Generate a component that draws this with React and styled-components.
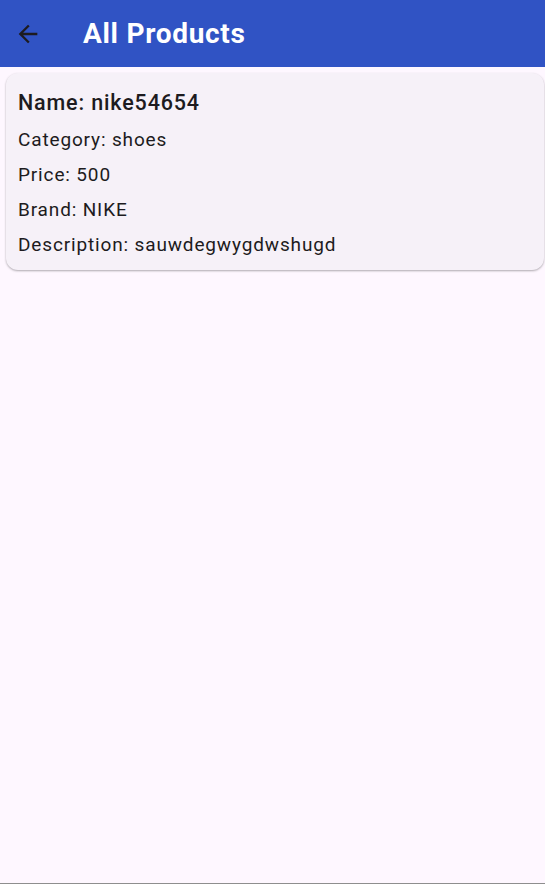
import styled, { createGlobalStyle } from 'styled-components';

const GlobalStyle = createGlobalStyle`
  html, body {
    margin: 0;
    padding: 0;
    height: 100%;
  }
  body {
    background: #fef7ff;
    font-family: Roboto, "Liberation Sans", sans-serif;
  }
  #root {
    min-height: 100%;
  }
`;

const Page = styled.div`
  min-height: 884px;
  box-sizing: border-box;
  display: flex;
  flex-direction: column;
  background: #fef7ff;
  border-bottom: 1px solid #8e8e8e;
`;

const AppBar = styled.header`
  height: 67px;
  background: #3053c4;
  display: flex;
  align-items: center;
  padding: 0 0 0 14px;
`;

const BackButton = styled.button`
  width: 28px;
  height: 28px;
  padding: 0;
  border: none;
  background: none;
  display: flex;
  align-items: center;
  justify-content: center;
  color: #1d1b20;
  cursor: pointer;
`;

const Title = styled.h1`
  margin: 0 0 0 41px;
  color: #ffffff;
  font-size: 28px;
  font-weight: 700;
  letter-spacing: 0.7px;
`;

const List = styled.main`
  padding: 6px 1px 0 6px;
  display: flex;
  flex-direction: column;
`;

const Card = styled.div`
  background: #f6f1f8;
  border-radius: 12px;
  padding: 15px 12px 12px 12px;
  display: flex;
  flex-direction: column;
  gap: 8px;
  box-shadow: 0 1px 2px rgba(0, 0, 0, 0.25), 0 1px 3px rgba(0, 0, 0, 0.08);
`;

const Line = styled.div`
  color: #1d1b20;
  font-size: ${p => (p.$head ? '21.5px' : '19px')};
  font-weight: ${p => (p.$head ? 500 : 400)};
  letter-spacing: ${p => (p.$head ? '0.85px' : '0.85px')};
  line-height: ${p => (p.$head ? '30px' : '27px')};
`;

const products = [
  {
    name: 'nike54654',
    category: 'shoes',
    price: 500,
    brand: 'NIKE',
    description: 'sauwdegwygdwshugd',
  },
];

export default function App() {
  return (
    <>
      <GlobalStyle />
      <Page>
        <AppBar>
          <BackButton aria-label="Back">
            <svg width="28" height="28" viewBox="0 0 24 24" fill="currentColor">
              <path d="M20 11H7.83l5.59-5.59L12 4l-8 8 8 8 1.41-1.41L7.83 13H20v-2z" />
            </svg>
          </BackButton>
          <Title>All Products</Title>
        </AppBar>
        <List>
          {products.map(p => (
            <Card key={p.name}>
              <Line $head>Name: {p.name}</Line>
              <Line>Category: {p.category}</Line>
              <Line>Price: {p.price}</Line>
              <Line>Brand: {p.brand}</Line>
              <Line>Description: {p.description}</Line>
            </Card>
          ))}
        </List>
      </Page>
    </>
  );
}
